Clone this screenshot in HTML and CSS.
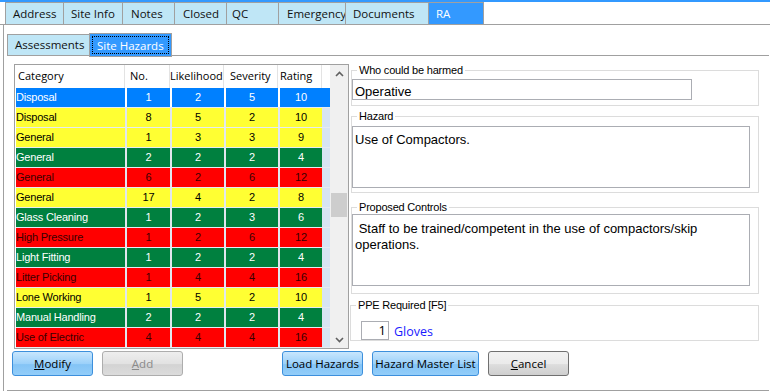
FILE: index.html
```html
<!DOCTYPE html>
<html lang="en">
<head>
    <meta charset="UTF-8">
    <meta name="viewport" content="width=device-width, initial-scale=1.0">
    <title>Site Hazards</title>
    <link rel="stylesheet" href="styles.css">
</head>
<body>

    <!-- Main tabs -->
    <div class="main-tabs">
        <div class="tab t-address">Address</div>
        <div class="tab t-siteinfo">Site Info</div>
        <div class="tab t-notes">Notes</div>
        <div class="tab t-closed">Closed</div>
        <div class="tab t-qc">QC</div>
        <div class="tab t-emergency">Emergency</div>
        <div class="tab t-documents">Documents</div>
        <div class="tab t-ra active">RA</div>
    </div>

    <div class="frame">
        <div class="sub-tabs">
            <div class="subtab">Assessments</div>
            <div class="subtab active"><span class="focus">Site Hazards</span></div>
        </div>

        <div class="page">
            <div class="work">

                <!-- Hazard grid -->
                <div class="grid">
                    <div class="grid-main">
                        <div class="grid-head">
                            <div class="c c-cat"><span class="h-cat">Category</span></div>
                            <div class="c c-no"><span class="h-no">No.</span></div>
                            <div class="c c-lik"><span class="h-lik">Likelihood</span></div>
                            <div class="c c-sev"><span class="h-sev">Severity</span></div>
                            <div class="c c-rat"><span class="h-rat">Rating</span></div>
                        </div>
                        <div class="row sel"><div class="c c-cat">Disposal</div><div class="c c-no">1</div><div class="c c-lik">2</div><div class="c c-sev">5</div><div class="c c-rat">10</div></div>
                        <div class="row yellow"><div class="c c-cat">Disposal</div><div class="c c-no">8</div><div class="c c-lik">5</div><div class="c c-sev">2</div><div class="c c-rat">10</div></div>
                        <div class="row yellow"><div class="c c-cat">General</div><div class="c c-no">1</div><div class="c c-lik">3</div><div class="c c-sev">3</div><div class="c c-rat">9</div></div>
                        <div class="row green"><div class="c c-cat">General</div><div class="c c-no">2</div><div class="c c-lik">2</div><div class="c c-sev">2</div><div class="c c-rat">4</div></div>
                        <div class="row red"><div class="c c-cat">General</div><div class="c c-no">6</div><div class="c c-lik">2</div><div class="c c-sev">6</div><div class="c c-rat">12</div></div>
                        <div class="row yellow"><div class="c c-cat">General</div><div class="c c-no">17</div><div class="c c-lik">4</div><div class="c c-sev">2</div><div class="c c-rat">8</div></div>
                        <div class="row green"><div class="c c-cat">Glass Cleaning</div><div class="c c-no">1</div><div class="c c-lik">2</div><div class="c c-sev">3</div><div class="c c-rat">6</div></div>
                        <div class="row red"><div class="c c-cat">High Pressure</div><div class="c c-no">1</div><div class="c c-lik">2</div><div class="c c-sev">6</div><div class="c c-rat">12</div></div>
                        <div class="row green"><div class="c c-cat">Light Fitting</div><div class="c c-no">1</div><div class="c c-lik">2</div><div class="c c-sev">2</div><div class="c c-rat">4</div></div>
                        <div class="row red"><div class="c c-cat">Litter Picking</div><div class="c c-no">1</div><div class="c c-lik">4</div><div class="c c-sev">4</div><div class="c c-rat">16</div></div>
                        <div class="row yellow"><div class="c c-cat">Lone Working</div><div class="c c-no">1</div><div class="c c-lik">5</div><div class="c c-sev">2</div><div class="c c-rat">10</div></div>
                        <div class="row green"><div class="c c-cat">Manual Handling</div><div class="c c-no">2</div><div class="c c-lik">2</div><div class="c c-sev">2</div><div class="c c-rat">4</div></div>
                        <div class="row red"><div class="c c-cat">Use of Electric</div><div class="c c-no">4</div><div class="c c-lik">4</div><div class="c c-sev">4</div><div class="c c-rat">16</div></div>
                    </div>
                    <div class="scrollbar">
                        <div class="sb-btn">
                            <svg width="9" height="6" viewBox="0 0 9 6"><polyline points="1,5 4.5,1.5 8,5" fill="none" stroke="#606060" stroke-width="1.6"/></svg>
                        </div>
                        <div class="sb-track"><div class="sb-thumb"></div></div>
                        <div class="sb-btn">
                            <svg width="9" height="6" viewBox="0 0 9 6"><polyline points="1,1 4.5,4.5 8,1" fill="none" stroke="#606060" stroke-width="1.6"/></svg>
                        </div>
                    </div>
                </div>

                <!-- Details -->
                <div class="details">
                    <fieldset class="group g-who">
                        <legend>Who could be harmed</legend>
                        <div class="input who-input">Operative</div>
                    </fieldset>
                    <fieldset class="group g-hazard">
                        <legend>Hazard</legend>
                        <textarea class="memo hazard-memo">Use of Compactors.</textarea>
                    </fieldset>
                    <fieldset class="group g-controls">
                        <legend>Proposed Controls</legend>
                        <textarea class="memo controls-memo"> Staff to be trained/competent in the use of compactors/skip operations.</textarea>
                    </fieldset>
                    <fieldset class="group g-ppe">
                        <legend>PPE Required [F5]</legend>
                        <div class="ppe-item">
                            <div class="qty">1</div>
                            <span class="ppe-name">Gloves</span>
                        </div>
                    </fieldset>
                </div>
            </div>

            <!-- Buttons -->
            <div class="actions">
                <button class="btn blue b-modify"><u>M</u>odify</button>
                <button class="btn disabled b-add"><u>A</u>dd</button>
                <button class="btn blue b-load">Load Hazards</button>
                <button class="btn blue b-master">Hazard Master List</button>
                <button class="btn grey b-cancel"><u>C</u>ancel</button>
            </div>
        </div>
    </div>

</body>
</html>
```

FILE: styles.css
```css
body {
    margin: 0;
    width: 770px;
    height: 391px;
    overflow: hidden;
    background-color: #fff;
    font-family: "Segoe UI", "Open Sans", sans-serif;
    font-size: 11.5px;
    color: #000;
}

/* main tab strip */
.main-tabs {
    display: flex;
    height: 22px;
    padding-left: 5px;
    border-top: 2px solid #3399ff;
    border-bottom: 1px solid #a0a0a0;
}
.tab {
    box-sizing: border-box;
    height: 22px;
    line-height: 21px;
    padding-left: 7px;
    background-color: #bfe6f6;
    border: 1px solid #a0a0a0;
    border-bottom: none;
    margin-right: -1px;
    color: #111;
}
.tab.active {
    background-color: #3399ff;
    color: #fff;
    border-color: #a0a0a0;
}
.t-address { width: 59px; }
.t-siteinfo { width: 60px; }
.t-notes { width: 53px; padding-left: 8px; }
.t-closed { width: 53px; padding-left: 8px; }
.t-qc { width: 53px; padding-left: 5px; }
.t-emergency { width: 68px; padding-left: 8px; }
.t-documents { width: 84px; padding-left: 7px; }
.t-ra { width: 56px; padding-left: 7px; }

/* frame + inner tabs */
.frame {
    margin-left: 3px;
    border-left: 1px solid #a0a0a0;
    height: 366px;
}
.sub-tabs {
    display: flex;
    align-items: flex-end;
    height: 21px;
    padding-top: 9px;
    margin-left: 3px;
    margin-right: 1px;
    border-bottom: 1px solid #a0a0a0;
}
.subtab {
    box-sizing: border-box;
    width: 83px;
    height: 22px;
    line-height: 20px;
    padding-left: 7px;
    margin-bottom: -1px;
    margin-right: -1px;
    background-color: #bfe6f6;
    border: 1px solid #a0a0a0;
    color: #111;
}
.subtab.active {
    height: 24px;
    margin-bottom: -2px;
    padding: 2px;
    background-color: #3399ff;
    color: #fff;
}
.subtab .focus {
    display: block;
    height: 18px;
    line-height: 17px;
    padding-left: 4px;
    border: 1px dotted #000;
    box-sizing: border-box;
}

.page {
    height: 326px;
    margin-left: 3px;
    margin-right: 1px;
    padding-top: 8px;
    border-bottom: 1px solid #a0a0a0;
}
.work {
    display: flex;
    align-items: flex-start;
}

/* grid */
.grid {
    display: flex;
    margin-left: 7px;
    width: 333px;
    height: 283px;
    border: 1px solid #a0a0a0;
    font-family: "Liberation Sans", Arial, sans-serif;
    font-size: 11px;
    letter-spacing: -0.2px;
}
.grid-main {
    width: 314px;
    padding-left: 1px;
    background-color: #fff;
}
.grid-head {
    display: flex;
    height: 23px;
    line-height: 21px;
    background-color: #fff;
    font-family: "Segoe UI", "Open Sans", sans-serif;
    font-size: 11px;
    letter-spacing: 0;
}
.grid-head .c {
    box-sizing: border-box;
    border-right: 1px solid #e3e3e3;
}
.h-cat { padding-left: 2px; }
.h-no { padding-left: 5px; }
.h-lik { padding-left: 0; }
.h-sev { padding-left: 6px; }
.h-rat { padding-left: 2px; }

.c {
    box-sizing: border-box;
    flex: none;
}
.c-cat { width: 109px; }
.c-no { width: 45px; }
.c-lik { width: 54px; }
.c-sev { width: 54px; }
.c-rat { width: 44px; }

.row {
    display: flex;
    height: 19px;
    margin-bottom: 1px;
    line-height: 19px;
    background-color: #d7e4f3;
    box-shadow: 0 1px 0 #e6ebf1;
}
.row .c {
    text-align: center;
    border-left: 2px solid #e1e7ee;
}
.row .c-cat {
    text-align: left;
    border-left: none;
}
.row.sel { background-color: #0080ff; color: #fff; }
.row.sel .c { border-left-color: #fff; }
.row.yellow .c { background-color: #ffff33; color: #000; }
.row.green .c { background-color: #00803f; color: #fff; }
.row.red .c { background-color: #ff0000; color: #3a0000; }

.scrollbar {
    display: flex;
    flex-direction: column;
    width: 18px;
    background-color: #f0f0f0;
}
.sb-btn {
    height: 17px;
    display: flex;
    align-items: center;
    justify-content: center;
}
.sb-track { flex: 1; }
.sb-thumb {
    margin: 111px 1px 0 1px;
    height: 24px;
    background-color: #cdcdcd;
}

/* detail groups */
.details {
    margin-left: 2px;
    width: 408px;
}
.group {
    margin: 0;
    padding: 0;
    min-width: 0;
    border: 1px solid #dcdcdc;
}
.group legend {
    margin-left: 5px;
    padding: 0 2px;
    height: 12px;
    line-height: 12px;
    font-family: "Liberation Sans", Arial, sans-serif;
    font-size: 11px;
    letter-spacing: -0.2px;
    color: #000;
}
.g-who { padding: 3px 0 5px 0; }
.g-hazard { margin-top: 4px; padding: 4px 0 4px 0; }
.g-controls { margin-top: 8px; padding: 1px 0 7px 0; }
.g-ppe { margin-top: 5px; margin-left: -1px; padding: 10px 0 0 0; }

.input, .memo {
    box-sizing: border-box;
    display: block;
    border: 1px solid #abadb3;
    background-color: #fff;
    font-family: "Liberation Sans", Arial, sans-serif;
    font-size: 13px;
    color: #000;
}
.who-input {
    width: 340px;
    height: 21px;
    line-height: 19px;
    padding: 2px 0 0 2px;
}
.memo {
    width: 398px;
    margin: 0;
    padding: 5px 2px 3px 2px;
    line-height: 16px;
    resize: none;
    overflow: hidden;
}
.hazard-memo { height: 62px; }
.controls-memo { height: 72px; padding-top: 6px; }

.ppe-item {
    display: flex;
    align-items: center;
    margin-left: 10px;
}
.qty {
    box-sizing: border-box;
    width: 28px;
    height: 19px;
    line-height: 17px;
    padding-right: 2px;
    text-align: right;
    border: 1px solid #abadb3;
    font-family: "Open Sans", sans-serif;
    font-size: 13px;
}
.ppe-name {
    margin-left: 5px;
    padding-top: 2px;
    color: #1a1aff;
    font-family: "Open Sans", sans-serif;
    font-size: 12.5px;
}

/* buttons */
.actions {
    display: flex;
    margin-top: 2px;
    margin-left: 5px;
}
.btn {
    box-sizing: border-box;
    width: 81px;
    height: 25px;
    margin: 0 9px 0 0;
    padding: 0;
    border-radius: 3px;
    font-family: "Segoe UI", "Open Sans", sans-serif;
    font-size: 11.5px;
    color: #000;
}
.btn.blue {
    border: 1px solid #3c8fdc;
    background: linear-gradient(#c8e6fd, #9cd1fa 50%, #84c4f6 55%, #92cdf9);
}
.btn.disabled {
    border: 1px solid #adadad;
    background: linear-gradient(#eeeeee, #e2e2e2 50%, #d3d3d3 55%, #dcdcdc);
    color: #8a8a8a;
}
.btn.grey {
    border: 1px solid #707070;
    background: linear-gradient(#f2f2f2, #ebebeb 50%, #dddddd 55%, #cfcfcf);
}
.b-load { margin-left: 90px; }
.b-master { width: 107px; }
```
